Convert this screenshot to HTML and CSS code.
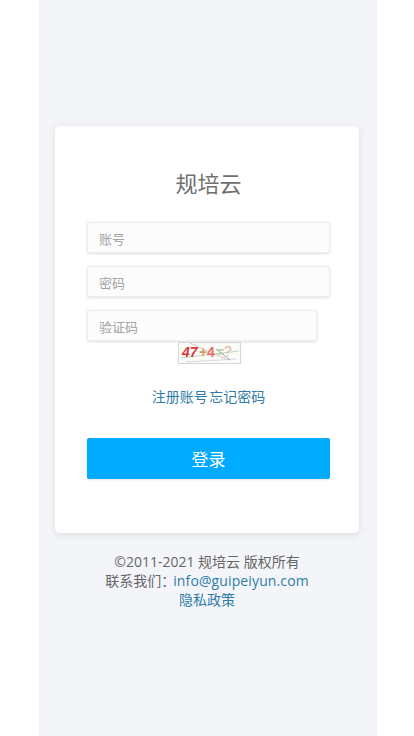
FILE: index.html
```html
<!DOCTYPE html>
<html lang="zh-CN">
<head>
    <meta charset="UTF-8">
    <meta name="viewport" content="width=device-width, initial-scale=1.0">
    <title>规培云</title>
    <link rel="stylesheet" href="styles.css">
</head>
<body>
    <div class="page">
        <div class="card">
            <h1 class="title">规培云</h1>
            <form class="login-form">
                <input class="field" type="text" placeholder="账号">
                <input class="field" type="password" placeholder="密码">
                <input class="field field-code" type="text" placeholder="验证码">
                <div class="captcha">
                    <svg width="63" height="22" viewBox="0 0 63 22">
                        <rect x="0.5" y="0.5" width="62" height="21" fill="#fbfbf8" stroke="#d6d6d6"/>
                        <path d="M12 1 L50 18" stroke="#d9c9b8" fill="none"/>
                        <path d="M3 16 L61 9" stroke="#bfd9c0" fill="none"/>
                        <path d="M8 20 L58 17" stroke="#d8d8d8" fill="none"/>
                        <path d="M38 7 L52 18" stroke="#a89ab0" fill="none"/>
                        <text x="4" y="15" class="cap-a">47</text>
                        <text x="21" y="15" class="cap-b">+</text>
                        <text x="29" y="15" class="cap-c">4</text>
                        <text x="38" y="15" class="cap-d">=</text>
                        <text x="46" y="14" class="cap-e">?</text>
                    </svg>
                </div>
                <div class="links">
                    <a href="#">注册账号</a> <a href="#">忘记密码</a>
                </div>
                <button class="submit" type="button">登录</button>
            </form>
        </div>
        <div class="footer">
            <div>©2011-2021 规培云 版权所有</div>
            <div>联系我们：<a class="mail" href="#">info@guipeiyun.com</a></div>
            <div><a href="#">隐私政策</a></div>
        </div>
    </div>
</body>
</html>
```

FILE: styles.css
```css
html, body {
    margin: 0;
    height: 100%;
    background-color: #fff;
}
body {
    font-family: "Open Sans", "Noto Sans CJK SC", sans-serif;
    color: #666;
    overflow: hidden;
}
a {
    color: #2f7ca8;
    text-decoration: none;
}
.page {
    box-sizing: border-box;
    width: 338px;
    height: 736px;
    margin-left: 39px;
    padding: 126px 18px 0 16px;
    background-color: #f3f5f9;
    box-shadow: 0 0 2px rgba(0, 0, 0, 0.06);
}
.card {
    box-sizing: border-box;
    height: 407px;
    padding: 41px 29px 0 32px;
    background-color: #fff;
    border-radius: 5px;
    box-shadow: 0 2px 8px rgba(0, 0, 0, 0.1);
}
.title {
    margin: 0 0 23px;
    height: 32px;
    font-size: 22px;
    line-height: 32px;
    font-weight: 400;
    text-align: center;
    color: #707070;
}
.login-form {
    display: flex;
    flex-direction: column;
}
.field {
    box-sizing: border-box;
    width: 243px;
    height: 31px;
    margin-bottom: 13px;
    padding: 2px 11px 0;
    font-family: inherit;
    font-size: 13px;
    background-color: #fcfcfc;
    border: 1px solid #eee;
    border-radius: 2px;
    box-shadow: 0 1px 3px rgba(0, 0, 0, 0.12);
    outline: none;
}
.field::placeholder {
    color: #a3a3a3;
}
.field-code {
    width: 230px;
    margin-bottom: 0;
}
.captcha {
    display: flex;
    justify-content: center;
    height: 22px;
    margin-top: 1px;
    padding-left: 1px;
}
.cap-a, .cap-b, .cap-c, .cap-d, .cap-e {
    font-family: "Liberation Sans", sans-serif;
    font-size: 14px;
    font-weight: 700;
}
.cap-a { fill: #d8383c; font-style: italic; }
.cap-b { fill: #c9a06a; }
.cap-c { fill: #ee6a6a; }
.cap-d { fill: #b9d3a8; }
.cap-e { fill: #e8b0a0; font-weight: 400; }
.links {
    margin-top: 23px;
    height: 20px;
    font-size: 14px;
    line-height: 20px;
    text-align: center;
    word-spacing: -2px;
}
.submit {
    height: 41px;
    width: 243px;
    margin-top: 31px;
    padding: 0;
    font-family: inherit;
    font-size: 17px;
    color: #fff;
    background-color: #0af;
    border: none;
    border-radius: 2px;
    box-shadow: 0 1px 2px rgba(0, 0, 0, 0.1);
}
.footer {
    margin-top: 19px;
    font-size: 14px;
    line-height: 19px;
    text-align: center;
}
.mail {
    margin-left: -2px;
    letter-spacing: 0.12px;
}
```
